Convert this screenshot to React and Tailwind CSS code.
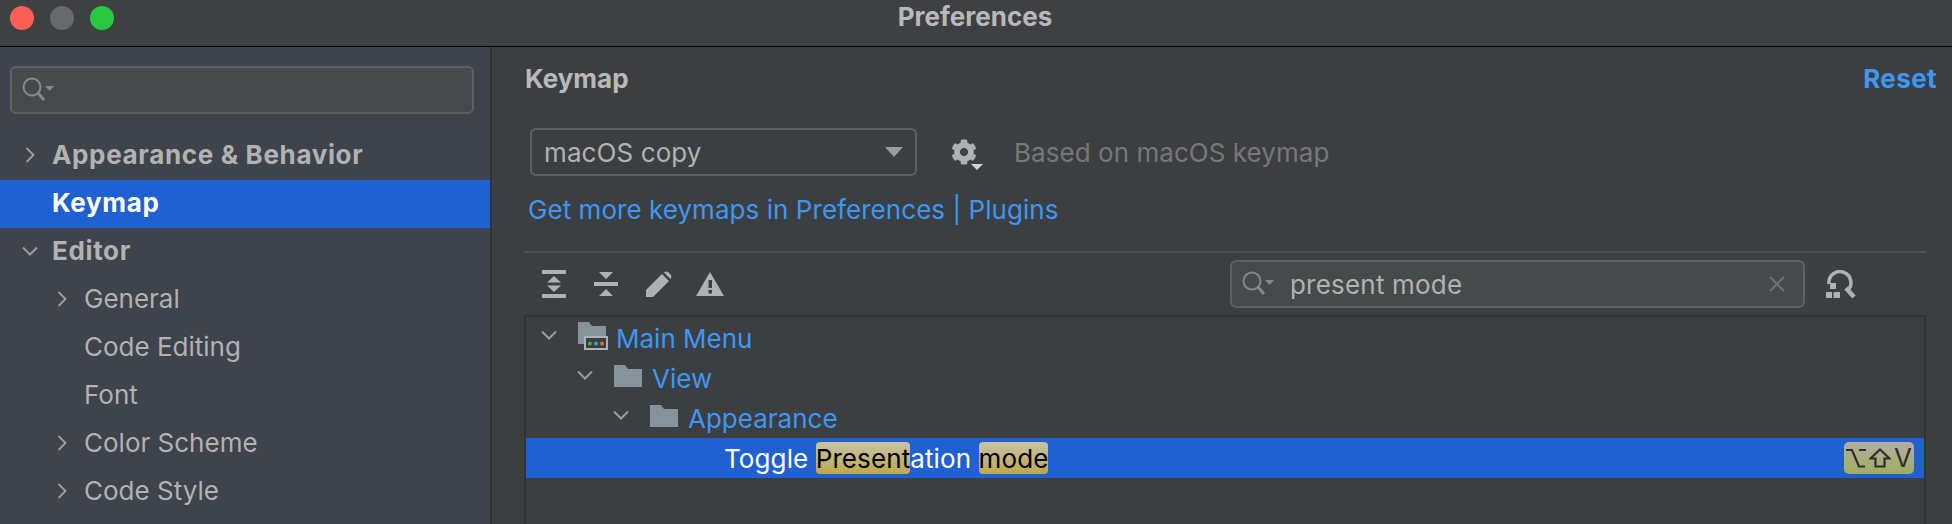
import React from "react";
import { FaCog } from "react-icons/fa";

const font = { fontFamily: "Inter, 'Noto Sans', sans-serif" };

function Chevron({ open, className = "" }) {
  return (
    <svg width="20" height="20" viewBox="0 0 20 20" fill="none" stroke="#9a9c9e" strokeWidth="2" className={className}>
      {open ? <path d="M3 6.5 L10 13.5 L17 6.5" /> : <path d="M6.5 3 L13.5 10 L6.5 17" />}
    </svg>
  );
}

function SearchIcon() {
  return (
    <svg width="34" height="28" viewBox="0 0 34 28" fill="none">
      <circle cx="10" cy="11" r="8.5" stroke="#7f8b91" strokeWidth="2" />
      <path d="M16 17 L22 24" stroke="#7f8b91" strokeWidth="3" />
      <path d="M23 10 H32 L27.5 15 Z" fill="#7f8b91" />
    </svg>
  );
}

function SideRow({ label, level = 0, chevron, bold, selected }) {
  return (
    <div
      className={`flex h-[48px] items-center pb-[4px] text-[26px] ${level === 0 ? "pl-[20px]" : "pl-[52px]"} ${
        selected ? "bg-[#1f61d3] text-white" : "text-[#b2b2b2]"
      } ${bold ? "font-bold tracking-[0.65px]" : ""}`}
    >
      <span className="flex w-[32px] shrink-0 translate-y-[1px] items-center">
        {chevron && <Chevron open={chevron === "open"} />}
      </span>
      {label}
    </div>
  );
}

function Folder({ className = "" }) {
  return (
    <svg width="28" height="22" viewBox="0 0 28 22" className={className}>
      <path d="M0 0 H11 L14 4 H28 V22 H0 Z" fill="#87939a" />
    </svg>
  );
}

function MenuFolder() {
  return (
    <svg width="30" height="28" viewBox="0 0 30 28" className="overflow-visible">
      <path d="M0 0 H11 L14 4 H28 V22 H0 Z" fill="#87939a" />
      <rect x="7" y="15" width="22" height="12" fill="#3c3f41" stroke="#a9b4ba" strokeWidth="2" />
      <circle cx="12" cy="21.5" r="2" fill="#3fb13a" />
      <circle cx="18" cy="21.5" r="2" fill="#1ea7d4" />
      <circle cx="24" cy="21.5" r="2" fill="#f26522" />
    </svg>
  );
}

function TreeRow({ level, label, menu }) {
  const pad = ["pl-[13px]", "pl-[49px]", "pl-[85px]"][level];
  return (
    <div className={`flex h-[40px] items-center text-[26px] text-[#3f97f5] ${pad}`}>
      <span className="flex w-[39px] shrink-0 -translate-y-[3px] items-center">
        <Chevron open />
      </span>
      <span className="flex w-[38px] shrink-0 -translate-y-[2px] items-center">
        {menu ? <MenuFolder /> : <Folder />}
      </span>
      {label}
    </div>
  );
}

function Hit({ children }) {
  return (
    <span className="inline-flex h-[32px] items-center rounded-[4px] bg-linear-to-b from-[#c6c3a4] to-[#bfa848] text-black">
      {children}
    </span>
  );
}

export default function App() {
  return (
    <div style={font} className="flex h-[524px] w-[1952px] flex-col overflow-hidden bg-[#3c3f41]">
      <header className="relative box-border flex h-[47px] shrink-0 items-center justify-center border-b border-black bg-[#3f4042]">
        <div className="absolute left-[10px] top-[6px] flex gap-[16px]">
          <span className="h-[24px] w-[24px] rounded-full bg-[#fe5f57]" />
          <span className="h-[24px] w-[24px] rounded-full bg-[#68696b]" />
          <span className="h-[24px] w-[24px] rounded-full bg-[#28c840]" />
        </div>
        <span className="-translate-x-[1px] -translate-y-[7px] text-[26px] font-bold text-[#b9b9b9]">Preferences</span>
      </header>

      <div className="flex min-h-0 flex-1">
        <aside className="box-border w-[492px] shrink-0 border-r-2 border-[#323334] bg-[#3e434c] pt-[19px]">
          <div className="ml-[10px] flex h-[48px] w-[464px] items-center rounded-[6px] border-2 border-[#5f6163] bg-[#464a4a] pl-[10px]">
            <SearchIcon />
          </div>
          <nav className="mt-[18px]">
            <SideRow label="Appearance & Behavior" chevron="closed" bold />
            <SideRow label="Keymap" bold selected />
            <SideRow label="Editor" chevron="open" bold />
            <SideRow label="General" level={1} chevron="closed" />
            <SideRow label="Code Editing" level={1} />
            <SideRow label="Font" level={1} />
            <SideRow label="Color Scheme" level={1} chevron="closed" />
            <SideRow label="Code Style" level={1} chevron="closed" />
          </nav>
        </aside>

        <main className="flex min-w-0 flex-1 flex-col">
          <div className="flex h-[62px] shrink-0 items-center justify-between pl-[33px] pr-[15px]">
            <span className="text-[26px] font-bold text-[#b9b9b9]">Keymap</span>
            <span className="text-[26px] font-bold tracking-[0.4px] text-[#3f97f5]">Reset</span>
          </div>

          <div className="mt-[19px] flex h-[48px] shrink-0 items-center pl-[38px]">
            <div className="flex h-[48px] w-[387px] items-center justify-between rounded-[6px] border-2 border-[#5f6163] pl-[12px] pr-[12px] text-[26px] tracking-[0.1px] text-[#b2b2b2]">
              macOS copy
              <svg width="18" height="10" viewBox="0 0 18 10"><path d="M0 0 H18 L9 10 Z" fill="#9a9c9e" /></svg>
            </div>
            <span className="relative ml-[34px] flex h-[28px] w-[26px] items-center">
              <FaCog className="text-[26px] text-[#afb1b3]" />
              <svg width="12" height="6" viewBox="0 0 12 6" className="absolute -right-[6px] bottom-[-4px]"><path d="M0 0 H12 L6 6 Z" fill="#d4d4d4" /></svg>
            </span>
            <span className="ml-[37px] text-[26px] tracking-[0.05px] text-[#787878]">Based on macOS keymap</span>
          </div>

          <div className="mt-[12px] flex h-[42px] shrink-0 items-center pl-[36px] text-[26px] tracking-[0.05px] text-[#3f97f5]">
            Get more keymaps in Preferences | Plugins
          </div>

          <div className="ml-[32px] mt-[21px] h-[2px] w-[1402px] shrink-0 bg-[#505152]" />

          <div className="flex h-[62px] shrink-0 items-center pl-[50px]">
            <svg width="24" height="28" viewBox="0 0 24 28" fill="#afb1b3">
              <rect width="24" height="4" />
              <rect y="24" width="24" height="4" />
              <path d="M12 6 L19 12.5 H5 Z M5 15.5 H19 L12 22 Z" />
            </svg>
            <svg width="24" height="24" viewBox="0 0 24 24" fill="#afb1b3" className="ml-[28px]">
              <rect y="10" width="24" height="4" />
              <path d="M5 0 H19 L12 7 Z M12 17 L19 24 H5 Z" />
            </svg>
            <svg width="26" height="26" viewBox="0 0 26 26" fill="#afb1b3" className="ml-[28px]">
              <path d="M0 19 L16 3 L23 10 L7 26 H0 Z M18 1.5 Q20 0 22 1 L25 4 Q26 6 24.5 8 Z" />
            </svg>
            <svg width="28" height="24" viewBox="0 0 28 24" className="ml-[24px]">
              <path d="M14 0 L28 24 H0 Z" fill="#afb1b3" />
              <rect x="12.5" y="8" width="3.5" height="8" fill="#3c3f41" />
              <rect x="12.5" y="18" width="3.5" height="3.5" fill="#3c3f41" />
            </svg>

            <div className="ml-[506px] flex h-[48px] w-[575px] items-center rounded-[6px] border-2 border-[#5f6163] bg-[#464a4a] pl-[10px] pr-[18px] text-[26px] tracking-[0.2px] text-[#b2b2b2]">
              <SearchIcon />
              <span className="ml-[14px] flex-1">present mode</span>
              <svg width="16" height="16" viewBox="0 0 16 16" stroke="#6d7173" strokeWidth="2"><path d="M1 1 L15 15 M15 1 L1 15" /></svg>
            </div>

            <svg width="30" height="28" viewBox="0 0 30 28" fill="none" className="ml-[21px]">
              <path d="M3 14 A11 11 0 1 1 21 21" stroke="#afb1b3" strokeWidth="3.5" />
              <path d="M20 18 L28 27" stroke="#afb1b3" strokeWidth="4.5" />
              <path d="M4 13 H10 V19 H4 Z M0 22 H6 V28 H0 Z M7.5 22 H14 V28 H7.5 Z" fill="#afb1b3" />
            </svg>
          </div>

          <section className="ml-[32px] box-border w-[1402px] flex-1 border-x-2 border-t-2 border-[#323334] pt-[1px]">
            <TreeRow level={0} label="Main Menu" menu />
            <TreeRow level={1} label="View" />
            <TreeRow level={2} label="Appearance" />
            <div className="flex h-[40px] items-center justify-between bg-[#1f61d3] pl-[198px] pr-[10px] text-[26px] tracking-[0.1px] text-white">
              <span className="flex items-center whitespace-pre">
                Toggle <Hit>Present</Hit>ation <Hit>mode</Hit>
              </span>
              <span className="flex h-[32px] w-[70px] items-center justify-center gap-[3px] rounded-[5px] bg-linear-to-b from-[#b5aca2] to-[#9fae5c] text-[26px] text-[#2e2e2e]">
                <svg width="20" height="20" viewBox="0 0 20 20" fill="none" stroke="#2e2e2e" strokeWidth="2.2">
                  <path d="M0 2 H6 L13 18.5 H19 M13 2 H20" />
                </svg>
                <svg width="22" height="20" viewBox="0 0 22 20" fill="none" stroke="#2e2e2e" strokeWidth="2.2">
                  <path d="M11 1.5 L20.5 10.5 H15.5 V18.5 H6.5 V10.5 H1.5 Z" />
                </svg>
                <span className="font-normal leading-none">V</span>
              </span>
            </div>
          </section>
        </main>
      </div>
    </div>
  );
}
